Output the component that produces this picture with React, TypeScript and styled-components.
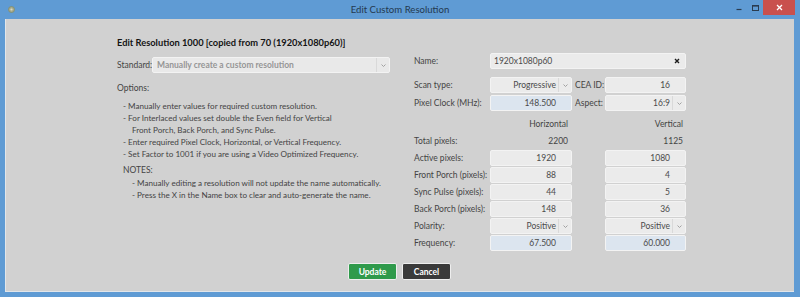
import React from 'react';
import styled, { createGlobalStyle } from 'styled-components';

const uiFont = `Lato, "Liberation Sans", sans-serif`;

const GlobalStyle = createGlobalStyle`
  html, body { margin: 0; padding: 0; }
  body {
    width: 800px;
    height: 297px;
    overflow: hidden;
    font-family: ${uiFont};
  }
`;

const Frame = styled.div`
  width: 800px;
  height: 297px;
  background: #5f9bd4;
  display: flex;
  flex-direction: column;
`;

const TitleBar = styled.div`
  height: 19px;
  flex: none;
  display: grid;
  grid-template-columns: 70px 1fr 70px;
  align-items: start;
`;

const AppIcon = styled.div`
  padding: 6px 0 0 8px;
  display: flex;
`;

const Title = styled.div`
  text-align: center;
  font-size: 9.6px;
  line-height: 19px;
  color: #24394f;
`;

const Controls = styled.div`
  display: flex;
  justify-content: flex-end;
  padding-right: 5px;
`;

const ControlButton = styled.div<{ $close?: boolean }>`
  width: ${p => (p.$close ? 32 : 16)}px;
  height: 15px;
  display: flex;
  align-items: center;
  justify-content: center;
  background: ${p => (p.$close ? '#c9504d' : 'transparent')};
`;

const Body = styled.div`
  flex: 1;
  margin: 0 6px 5px 5px;
  background: #d1d1d1;
  box-shadow: inset 1px 0 0 #e2e6ea, inset 0 -1px 0 #e2e6ea;
  display: flex;
  flex-direction: column;
`;

const Columns = styled.div`
  display: flex;
  align-items: flex-start;
  padding-left: 112px;
  gap: 24px;
`;

const LeftColumn = styled.div`
  width: 273px;
  padding-top: 17px;
  color: #444;
  font-size: 8.5px;
`;

const Heading = styled.div`
  font-weight: 700;
  font-size: 9.3px;
  line-height: 14px;
  color: #141414;
  white-space: nowrap;
`;

const StandardRow = styled.div`
  margin-top: 7px;
  display: flex;
  align-items: center;
  height: 16px;
`;

const StandardLabel = styled.div`
  width: 35px;
  flex: none;
`;

const SectionLabel = styled.div<{ $top: number; $indent?: number }>`
  margin-top: ${p => p.$top}px;
  padding-left: ${p => p.$indent ?? 0}px;
  line-height: 14px;
`;

const NoteList = styled.div<{ $top: number; $indent: number }>`
  margin-top: ${p => p.$top}px;
  padding-left: ${p => p.$indent}px;
  font-size: 8.1px;
  line-height: 12px;
  white-space: nowrap;
`;

const NoteLine = styled.div<{ $sub?: boolean }>`
  padding-left: ${p => (p.$sub ? 9 : 0)}px;
`;

const RightColumn = styled.div`
  width: 272px;
  padding-top: 34px;
  color: #444;
  font-size: 8.5px;
`;

const FormRow = styled.div<{ $top?: number }>`
  display: grid;
  grid-template-columns: 76px 82px 33px 81px;
  height: 17px;
  margin-top: ${p => p.$top ?? 0}px;
  align-items: start;
`;

const Label = styled.div<{ $pad?: number }>`
  line-height: 16px;
  padding-left: ${p => p.$pad ?? 0}px;
  white-space: nowrap;
`;

const Static = styled.div<{ $pad: number }>`
  line-height: 16px;
  text-align: right;
  padding-right: ${p => p.$pad}px;
  color: #444;
`;

const Field = styled.div<{ $blue?: boolean; $wide?: boolean }>`
  height: 16px;
  box-sizing: border-box;
  grid-column: ${p => (p.$wide ? '2 / 5' : 'auto')};
  border: 1px solid #f3f3f3;
  border-radius: 2px;
  background: ${p => (p.$blue ? '#dce5ef' : '#ebebeb')};
  display: flex;
  align-items: center;
  color: #4a4a4a;
`;

const FieldText = styled.div<{ $left?: boolean; $pad: number }>`
  flex: 1;
  text-align: ${p => (p.$left ? 'left' : 'right')};
  padding: ${p => (p.$left ? `0 0 0 ${p.$pad}px` : `0 ${p.$pad}px 0 0`)};
  white-space: nowrap;
  overflow: hidden;
`;

const SelectArrow = styled.div`
  width: 12px;
  height: 100%;
  flex: none;
  border-left: 1px solid #d9d9d9;
  display: flex;
  align-items: center;
  justify-content: center;
`;

const StandardSelect = styled(Field)`
  flex: 1;
  background: #e9e9e9;
  color: #969696;
  font-weight: 700;
`;

const Footer = styled.div`
  margin-top: auto;
  padding-bottom: 12px;
  display: flex;
  justify-content: center;
  gap: 5px;
`;

const ActionButton = styled.button<{ $variant: 'update' | 'cancel' }>`
  width: 49px;
  height: 17px;
  padding: 0;
  border: 1px solid #eeeeee;
  border-radius: 2px;
  background: ${p => (p.$variant === 'update' ? '#2f9a4b' : '#3a3a3a')};
  color: #fff;
  font-family: ${uiFont};
  font-weight: 700;
  font-size: 8.5px;
`;

const Chevron = () => (
  <svg width="5" height="3" viewBox="0 0 5 3">
    <path d="M0.5 0.5 L2.5 2.5 L4.5 0.5" fill="none" stroke="#9a9a9a" strokeWidth="0.9" />
  </svg>
);

const ClearX = () => (
  <svg width="6" height="6" viewBox="0 0 6 6" style={{ marginRight: 5 }}>
    <path d="M1 1 L5 5 M5 1 L1 5" stroke="#1c1c1c" strokeWidth="1.4" />
  </svg>
);

const Select = ({ value, blue }: { value: string; blue?: boolean }) => (
  <Field $blue={blue}>
    <FieldText $pad={2}>{value}</FieldText>
    <SelectArrow>
      <Chevron />
    </SelectArrow>
  </Field>
);

const Value = ({ value, blue }: { value: string; blue?: boolean }) => (
  <Field $blue={blue}>
    <FieldText $pad={15}>{value}</FieldText>
  </Field>
);

const timingRows = [
  { label: 'Active pixels:', h: '1920', v: '1080' },
  { label: 'Front Porch (pixels):', h: '88', v: '4' },
  { label: 'Sync Pulse (pixels):', h: '44', v: '5' },
  { label: 'Back Porch (pixels):', h: '148', v: '36' },
];

export default function App() {
  return (
    <>
      <GlobalStyle />
      <Frame>
        <TitleBar>
          <AppIcon>
            <svg width="7" height="7" viewBox="0 0 7 7">
              <circle cx="3.5" cy="3.5" r="3" fill="#a7ab8c" stroke="#7f8b6a" strokeWidth="0.8" />
              <circle cx="3.5" cy="3.5" r="1.1" fill="#d7d9c8" />
            </svg>
          </AppIcon>
          <Title>Edit Custom Resolution</Title>
          <Controls>
            <ControlButton>
              <svg width="6" height="6" viewBox="0 0 6 6">
                <path d="M0.5 4.5 H5.5" stroke="#2a3c50" strokeWidth="1.2" />
              </svg>
            </ControlButton>
            <ControlButton>
              <svg width="7" height="6" viewBox="0 0 7 6">
                <rect x="0.5" y="0.5" width="6" height="5" fill="none" stroke="#2a3c50" strokeWidth="1" />
                <path d="M0.5 1 H6.5" stroke="#2a3c50" strokeWidth="1.2" />
              </svg>
            </ControlButton>
            <ControlButton $close>
              <svg width="7" height="7" viewBox="0 0 7 7">
                <path d="M1 1 L6 6 M6 1 L1 6" stroke="#ffffff" strokeWidth="1.3" />
              </svg>
            </ControlButton>
          </Controls>
        </TitleBar>

        <Body>
          <Columns>
            <LeftColumn>
              <Heading>Edit Resolution 1000 [copied from 70 (1920x1080p60)]</Heading>
              <StandardRow>
                <StandardLabel>Standard:</StandardLabel>
                <StandardSelect>
                  <FieldText $left $pad={4}>Manually create a custom resolution</FieldText>
                  <SelectArrow>
                    <Chevron />
                  </SelectArrow>
                </StandardSelect>
              </StandardRow>
              <SectionLabel $top={8}>Options:</SectionLabel>
              <NoteList $top={5} $indent={6}>
                <NoteLine>- Manually enter values for required custom resolution.</NoteLine>
                <NoteLine>- For Interlaced values set double the Even field for Vertical</NoteLine>
                <NoteLine $sub>Front Porch, Back Porch, and Sync Pulse.</NoteLine>
                <NoteLine>- Enter required Pixel Clock, Horizontal, or Vertical Frequency.</NoteLine>
                <NoteLine>- Set Factor to 1001 if you are using a Video Optimized Frequency.</NoteLine>
              </NoteList>
              <SectionLabel $top={3} $indent={6}>NOTES:</SectionLabel>
              <NoteList $top={0} $indent={15}>
                <NoteLine>- Manually editing a resolution will not update the name automatically.</NoteLine>
                <NoteLine>- Press the X in the Name box to clear and auto-generate the name.</NoteLine>
              </NoteList>
            </LeftColumn>

            <RightColumn>
              <FormRow>
                <Label>Name:</Label>
                <Field $wide>
                  <FieldText $left $pad={3}>1920x1080p60</FieldText>
                  <ClearX />
                </Field>
              </FormRow>
              <FormRow $top={7}>
                <Label>Scan type:</Label>
                <Select value="Progressive" />
                <Label $pad={3}>CEA ID:</Label>
                <Value value="16" />
              </FormRow>
              <FormRow $top={1}>
                <Label>Pixel Clock (MHz):</Label>
                <Value value="148.500" blue />
                <Label $pad={3}>Aspect:</Label>
                <Select value="16:9" />
              </FormRow>
              <FormRow $top={4}>
                <span />
                <Static $pad={4}>Horizontal</Static>
                <span />
                <Static $pad={3}>Vertical</Static>
              </FormRow>
              <FormRow>
                <Label>Total pixels:</Label>
                <Static $pad={4}>2200</Static>
                <span />
                <Static $pad={3}>1125</Static>
              </FormRow>
              {timingRows.map(row => (
                <FormRow key={row.label}>
                  <Label>{row.label}</Label>
                  <Value value={row.h} />
                  <span />
                  <Value value={row.v} />
                </FormRow>
              ))}
              <FormRow>
                <Label>Polarity:</Label>
                <Select value="Positive" />
                <span />
                <Select value="Positive" />
              </FormRow>
              <FormRow>
                <Label>Frequency:</Label>
                <Value value="67.500" blue />
                <span />
                <Value value="60.000" blue />
              </FormRow>
            </RightColumn>
          </Columns>

          <Footer>
            <ActionButton $variant="update">Update</ActionButton>
            <ActionButton $variant="cancel">Cancel</ActionButton>
          </Footer>
        </Body>
      </Frame>
    </>
  );
}
